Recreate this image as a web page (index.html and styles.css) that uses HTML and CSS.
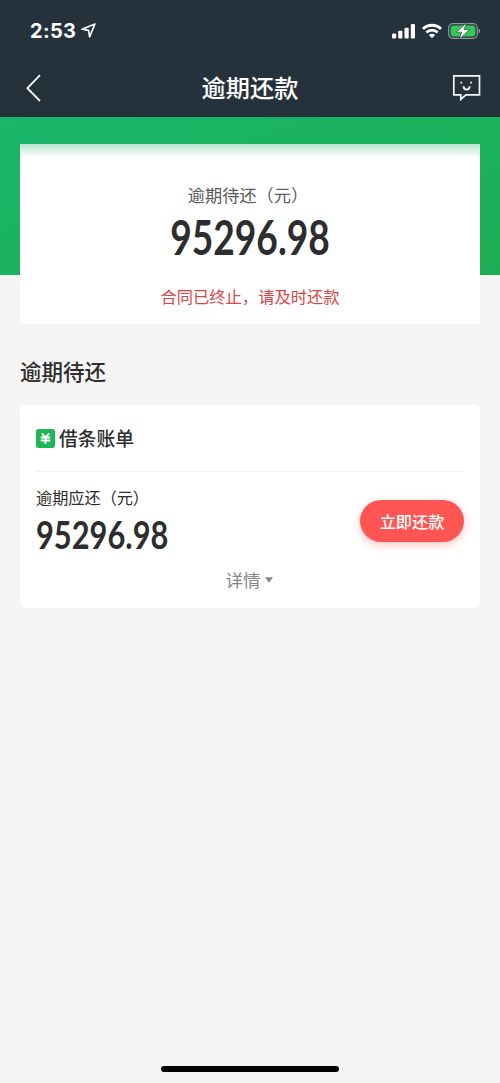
FILE: index.html
```html
<!DOCTYPE html>
<html lang="zh-CN">
<head>
<meta charset="utf-8">
<title>逾期还款</title>
<link rel="stylesheet" href="styles.css">
</head>
<body>
<header class="header">
  <div class="status">
    <div class="status-left">
      <span class="time">2:53</span>
      <svg class="location" width="15" height="15" viewBox="0 0 14 14"><path d="M13 .9.9 5.9l6.2 1 .9 6z" fill="none" stroke="#fff" stroke-width="1.5" stroke-linejoin="round"/></svg>
    </div>
    <div class="status-right">
      <svg width="24" height="16" viewBox="0 0 24 16" fill="#fff"><rect x="0" y="10.5" width="4.2" height="5" rx="1"/><rect x="6.2" y="7.8" width="4.2" height="7.7" rx="1"/><rect x="12.5" y="4.8" width="4.2" height="10.7" rx="1"/><rect x="18.8" y="1" width="4.2" height="14.5" rx="1"/></svg>
      <svg width="20" height="16" viewBox="0 0 20 16" fill="none" stroke="#fff" stroke-width="2.8"><path d="M1 5.9a12.9 12.9 0 0 1 18 0"/><path d="M4.4 9.4a8 8 0 0 1 11.2 0"/><path d="M10 15.2 6.9 12a4.4 4.4 0 0 1 6.2 0z" fill="#fff" stroke="none"/></svg>
      <svg class="battery" width="33" height="18" viewBox="0 0 33 18"><rect x=".7" y="1.7" width="28.6" height="14.6" rx="4.4" fill="none" stroke="#92999d" stroke-width="1.2"/><rect x="2.6" y="3.6" width="24.8" height="10.8" rx="2.8" fill="#35c759"/><path d="M30.7 6.5c2 .8 2 4.2 0 5z" fill="#92999d"/><path d="M18.4.8 8.4 10.2h5.2l-2.2 7.1 10-9.7H16z" fill="#fff" stroke="#26323b" stroke-width=".6"/></svg>
    </div>
  </div>
  <nav class="nav">
    <svg width="30" height="30" viewBox="0 0 30 30"><path d="M21 2.2 8.4 15.2 21 28" fill="none" stroke="#fff" stroke-width="1.8"/></svg>
    <h1 class="title">逾期还款</h1>
    <svg width="30" height="30" viewBox="0 0 30 30" fill="none" stroke="#f3f6f8" stroke-width="1.7"><path d="M2.8 2.8h25.7v19.1H14.9l-5.1 4.4v-4.4h-7z"/><path d="M12.5 13.2c.2 4.5 6 4.5 6.2 0" stroke-width="1.9"/><path d="M9.5 9.6h1.7M19.2 9.6h1.7" stroke-width="1.6"/></svg>
  </nav>
</header>
<main class="main">
  <section class="hero">
    <div class="summary">
      <div class="summary-label">逾期待还（元）</div>
      <div class="amount amount-large"><span class="digits">95296.98</span></div>
      <div class="notice">合同已终止，请及时还款</div>
    </div>
  </section>
  <h2 class="section-title">逾期待还</h2>
  <section class="bill">
    <div class="bill-head">
      <svg width="19" height="19" viewBox="0 0 19 19"><rect width="19" height="19" rx="2.5" fill="#21b558"/><path d="m5.8 4.4 3.7 4 3.7-4M9.5 8v7M4.8 8.5h9.4M4.8 11.5h9.4" fill="none" stroke="#fff" stroke-width="1.8"/></svg>
      <span class="bill-name">借条账单</span>
    </div>
    <div class="bill-row">
      <div>
        <div class="bill-label">逾期应还<span class="unit">（元）</span></div>
        <div class="amount amount-small"><span class="digits">95296.98</span></div>
      </div>
      <button class="pay">立即还款</button>
    </div>
    <div class="details">详情<svg width="8" height="6" viewBox="0 0 8 6"><path d="M0 .3h8L4 5.8z" fill="#858585"/></svg></div>
  </section>
</main>
<div class="home-bar"></div>
</body>
</html>
```
FILE: styles.css
```css
* { box-sizing: border-box; }
body {
  margin: 0;
  height: 1083px;
  display: flex;
  flex-direction: column;
  overflow: hidden;
  background: #f5f5f5;
  color: #2d2d2f;
  font-family: "Noto Sans CJK SC", sans-serif;
}
svg { display: block; flex: none; }
.header { height: 117px; background: #26323b; color: #fff; flex: none; }
.status {
  height: 60px;
  padding: 1px 19px 0 30px;
  display: flex;
  align-items: center;
  justify-content: space-between;
}
.status-left { display: flex; align-items: center; gap: 5px; }
.time { font: 700 20px/24px Inter, sans-serif; letter-spacing: .3px; }
.status-right { display: flex; align-items: center; gap: 6px; }
.nav {
  height: 56px;
  padding: 0 19px;
  display: flex;
  align-items: center;
  justify-content: space-between;
}
.title { margin: 0 0 2px; font-size: 24.2px; line-height: 36px; font-weight: 500; }
.main { flex: 1; }
.hero {
  height: 158px;
  padding: 27px 20px 0;
  background: linear-gradient(160deg, #1bb56b 0%, #1bb35d 50%, #1dac53 100%);
}
.summary {
  height: 180px;
  padding-top: 38px;
  text-align: center;
  background: linear-gradient(#b5e4cb 0, #d8f0e4 6px, #f7fcf9 12px, #fff 17px);
}
.summary-label { padding-right: 4px; font-size: 17.2px; line-height: 26px; color: #5b5b5b; }
.amount { font-family: Lato, sans-serif; font-weight: 700; white-space: nowrap; }
.digits { display: inline-block; transform: scaleX(.79); }
.amount-large { height: 60px; font-size: 47px; line-height: 58px; }
.notice { margin-top: 15px; font-size: 16.3px; line-height: 26px; color: #dc4247; }
.section-title {
  margin: 80px 20px 0;
  font-size: 21.5px;
  line-height: 32px;
  font-weight: 500;
}
.bill {
  height: 203px;
  margin: 18px 20px 0;
  padding: 0 16px;
  border-radius: 6px;
  background: #fff;
}
.bill-head {
  height: 67px;
  border-bottom: 1px solid #f1f1f1;
  display: flex;
  align-items: center;
  gap: 4px;
  font-size: 18.8px;
  font-weight: 500;
}
.bill-name { margin-bottom: 2px; }
.bill-row { height: 95px; display: flex; justify-content: space-between; }
.bill-label { margin-top: 12px; font-size: 16.2px; line-height: 26px; }
.unit { letter-spacing: -.2px; }
.amount-small { height: 48px; font-size: 39px; line-height: 48px; }
.amount-small .digits { transform-origin: left; }
.pay {
  width: 104px;
  height: 42px;
  margin: 28px 0 0;
  padding: 0;
  border: 0;
  border-radius: 21px;
  background: #ff5654;
  box-shadow: 0 3px 9px rgba(255, 86, 84, .35);
  color: #fff;
  font: 500 16.2px/40px "Noto Sans CJK SC", sans-serif;
}
.details {
  padding-right: 2px;
  display: flex;
  align-items: center;
  justify-content: center;
  gap: 4px;
  font-size: 17.5px;
  line-height: 26px;
  color: #858585;
}
.home-bar {
  flex: none;
  width: 178px;
  height: 6px;
  margin: 0 auto 11px;
  border-radius: 3px;
  background: #000;
}
```
